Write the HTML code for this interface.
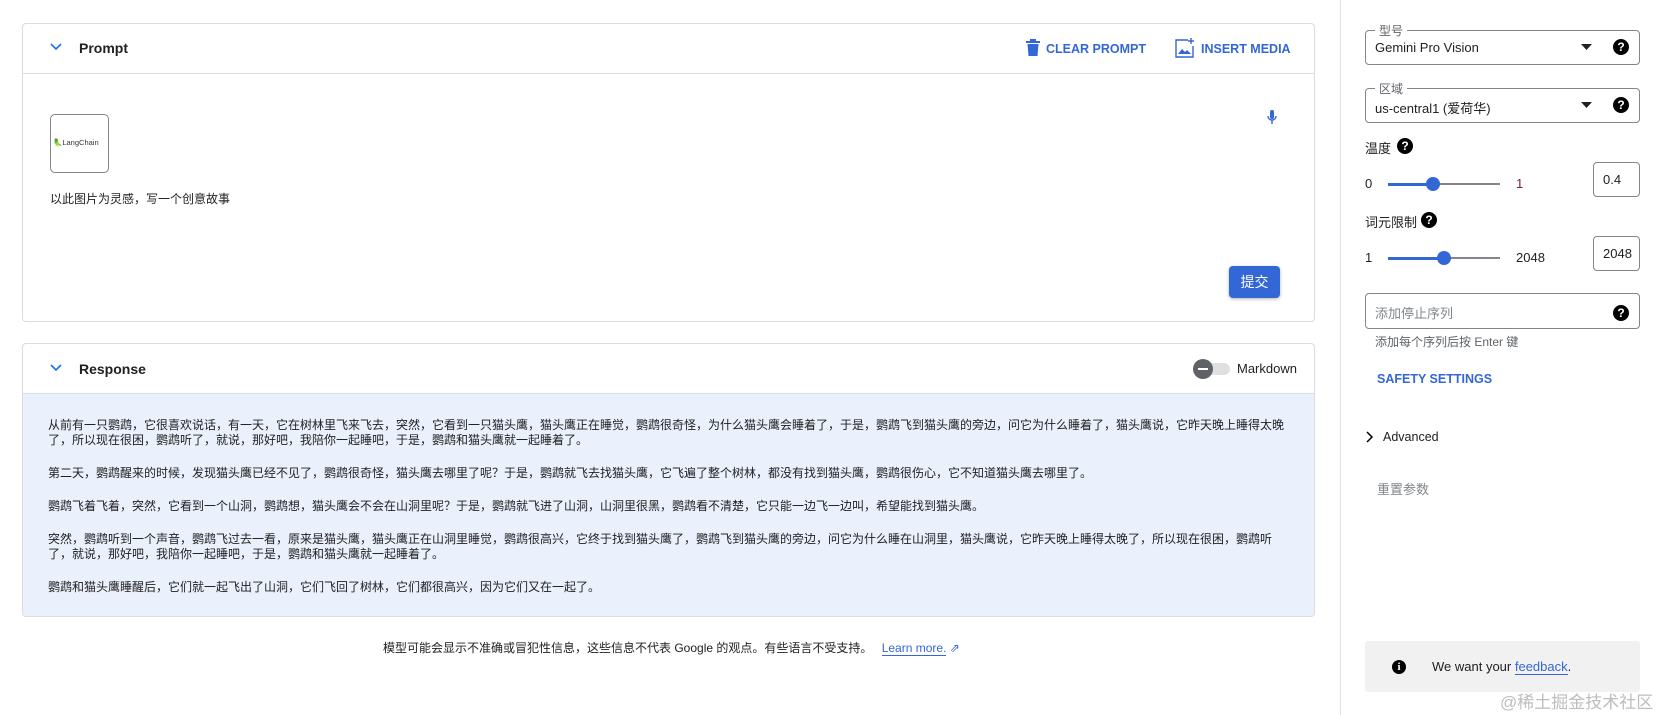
<!DOCTYPE html>
<html><head><meta charset="utf-8"><style>
*{box-sizing:border-box;margin:0;padding:0}
body{width:1665px;height:715px;background:#fff;font-family:"Liberation Sans","Noto Sans CJK SC",sans-serif;color:#202124;position:relative;overflow:hidden}
.a{position:absolute}
.card{position:absolute;left:22px;width:1293px;border:1px solid #dadce0;border-radius:4px;background:#fff}
.cjk{font-family:"Liberation Sans","Noto Sans CJK SC",sans-serif}
.field{position:absolute;left:1365px;width:275px;border:1px solid #80868b;border-radius:4px}
.lbl{position:absolute;top:-9px;left:9px;background:#fff;padding:0 4px;font-size:12px;color:#5f6368}
.q{position:absolute;width:16px;height:16px;border-radius:50%;background:#000;color:#fff;font-size:12px;font-weight:bold;text-align:center;line-height:16px}
.resp p{font-size:12px;line-height:15px;color:#202124;margin-bottom:18px;white-space:nowrap}
</style></head><body>

<div class="card" style="top:23px;height:299px">
  <div class="a" style="left:0;top:49px;width:1291px;height:1px;background:#dadce0"></div>
</div>
<svg class="a" style="left:49px;top:42px" width="14" height="10" viewBox="0 0 14 10"><path d="M2 2l5 5 5-5" stroke="#1a73e8" stroke-width="1.6" fill="none"/></svg>
<div class="a" style="left:79px;top:40px;font-size:14px;font-weight:bold">Prompt</div>
<svg class="a" style="left:1026px;top:39px" width="14" height="17" viewBox="0 0 14 17"><rect x="0" y="2" width="14" height="2" fill="#3367d6"/><rect x="4" y="0" width="6" height="2" fill="#3367d6"/><path d="M1.5 5h11l-1 12h-9z" fill="#3367d6"/></svg>
<div class="a" style="left:1046px;top:42px;font-size:12.5px;color:#3367d6;font-weight:bold">CLEAR PROMPT</div>
<svg class="a" style="left:1175px;top:38px" width="20" height="20" viewBox="0 0 20 20"><path d="M13 2H1v17h17V8" stroke="#3367d6" stroke-width="1.4" fill="none"/><path d="M16 0v6M13 3h6" stroke="#3367d6" stroke-width="1.4"/><path d="M3 16l4-5 3 3 2-2 4 4z" fill="#3367d6"/></svg>
<div class="a" style="left:1201px;top:42px;font-size:12.5px;color:#3367d6;font-weight:bold">INSERT MEDIA</div>
<div class="a" style="left:50px;top:114px;width:59px;height:59px;border:1px solid #80868b;border-radius:5px;background:#fff"></div>
<div class="a" style="left:53px;top:138px;font-size:7.5px;color:#333;white-space:nowrap"><span style="color:#6b8e23">🦜</span>LangChain</div>
<svg class="a" style="left:1267px;top:110px" width="10" height="15" viewBox="0 0 10 15"><rect x="3" y="0" width="4" height="9" rx="2" fill="#3367d6"/><path d="M1 6a4 4 0 0 0 8 0M5 10v4" stroke="#3367d6" stroke-width="1.4" fill="none"/></svg>
<div class="a cjk" style="left:50px;top:190px;font-size:12px">以此图片为灵感，写一个创意故事</div>
<div class="a cjk" style="left:1229px;top:266px;width:51px;height:32px;background:#3367d6;border-radius:4px;color:#fff;font-size:14px;text-align:center;line-height:32px;box-shadow:0 1px 3px rgba(0,0,0,.3)">提交</div>

<div class="card" style="top:343px;height:274px;overflow:hidden">
  <div class="a" style="left:0;top:49px;width:1291px;height:230px;background:#ebf1fc;border-top:1px solid #dadce0"></div>
</div>
<svg class="a" style="left:49px;top:363px" width="14" height="10" viewBox="0 0 14 10"><path d="M2 2l5 5 5-5" stroke="#1a73e8" stroke-width="1.6" fill="none"/></svg>
<div class="a" style="left:79px;top:361px;font-size:14px;font-weight:bold">Response</div>
<div class="a" style="left:1200px;top:363px;width:30px;height:12px;border-radius:6px;background:#e0e0e0"></div>
<div class="a" style="left:1193px;top:359px;width:20px;height:20px;border-radius:50%;background:#5f6368"></div>
<div class="a" style="left:1198px;top:368px;width:10px;height:2px;background:#fff"></div>
<div class="a" style="left:1237px;top:361px;font-size:13px">Markdown</div>
<div class="a resp cjk" style="left:48px;top:418px">
<p>从前有一只鹦鹉，它很喜欢说话，有一天，它在树林里飞来飞去，突然，它看到一只猫头鹰，猫头鹰正在睡觉，鹦鹉很奇怪，为什么猫头鹰会睡着了，于是，鹦鹉飞到猫头鹰的旁边，问它为什么睡着了，猫头鹰说，它昨天晚上睡得太晚<br>了，所以现在很困，鹦鹉听了，就说，那好吧，我陪你一起睡吧，于是，鹦鹉和猫头鹰就一起睡着了。</p>
<p>第二天，鹦鹉醒来的时候，发现猫头鹰已经不见了，鹦鹉很奇怪，猫头鹰去哪里了呢？于是，鹦鹉就飞去找猫头鹰，它飞遍了整个树林，都没有找到猫头鹰，鹦鹉很伤心，它不知道猫头鹰去哪里了。</p>
<p>鹦鹉飞着飞着，突然，它看到一个山洞，鹦鹉想，猫头鹰会不会在山洞里呢？于是，鹦鹉就飞进了山洞，山洞里很黑，鹦鹉看不清楚，它只能一边飞一边叫，希望能找到猫头鹰。</p>
<p>突然，鹦鹉听到一个声音，鹦鹉飞过去一看，原来是猫头鹰，猫头鹰正在山洞里睡觉，鹦鹉很高兴，它终于找到猫头鹰了，鹦鹉飞到猫头鹰的旁边，问它为什么睡在山洞里，猫头鹰说，它昨天晚上睡得太晚了，所以现在很困，鹦鹉听<br>了，就说，那好吧，我陪你一起睡吧，于是，鹦鹉和猫头鹰就一起睡着了。</p>
<p>鹦鹉和猫头鹰睡醒后，它们就一起飞出了山洞，它们飞回了树林，它们都很高兴，因为它们又在一起了。</p>
</div>

<div class="a cjk" style="left:383px;top:639px;font-size:12px;white-space:nowrap">模型可能会显示不准确或冒犯性信息，这些信息不代表 Google 的观点。有些语言不受支持。 <span style="color:#3367d6;border-bottom:1px solid #3367d6;margin-left:6px">Learn more.</span> <span style="color:#3367d6">⇗</span></div>

<div class="a" style="left:1340px;top:0;width:1px;height:715px;background:#e0e0e0"></div>

<div class="field" style="top:30px;height:35px"><div class="lbl">型号</div>
<div class="a" style="left:9px;top:9px;font-size:13px">Gemini Pro Vision</div></div>
<svg class="a" style="left:1581px;top:44px" width="11" height="6"><path d="M0 0h11L5.5 6z" fill="#202124"/></svg>
<div class="q" style="left:1613px;top:39px">?</div>

<div class="field" style="top:88px;height:35px"><div class="lbl">区域</div>
<div class="a" style="left:9px;top:9px;font-size:13px">us-central1 (爱荷华)</div></div>
<svg class="a" style="left:1581px;top:102px" width="11" height="6"><path d="M0 0h11L5.5 6z" fill="#202124"/></svg>
<div class="q" style="left:1613px;top:97px">?</div>

<div class="a" style="left:1365px;top:138px;font-size:13px">温度</div>
<div class="q" style="left:1397px;top:138px">?</div>
<div class="a" style="left:1365px;top:176px;font-size:13px">0</div>
<div class="a" style="left:1388px;top:183px;width:112px;height:2px;background:#80868b"></div>
<div class="a" style="left:1388px;top:183px;width:45px;height:3px;background:#3367d6"></div>
<div class="a" style="left:1426px;top:177px;width:14px;height:14px;border-radius:50%;background:#3367d6"></div>
<div class="a" style="left:1516px;top:176px;font-size:13px;color:#7a2036">1</div>
<div class="a" style="left:1593px;top:162px;width:47px;height:35px;border:1px solid #80868b;border-radius:4px;font-size:13px;padding:9px 0 0 9px">0.4</div>

<div class="a" style="left:1365px;top:212px;font-size:13px">词元限制</div>
<div class="q" style="left:1421px;top:212px">?</div>
<div class="a" style="left:1365px;top:250px;font-size:13px">1</div>
<div class="a" style="left:1388px;top:257px;width:112px;height:2px;background:#80868b"></div>
<div class="a" style="left:1388px;top:257px;width:56px;height:3px;background:#3367d6"></div>
<div class="a" style="left:1437px;top:251px;width:14px;height:14px;border-radius:50%;background:#3367d6"></div>
<div class="a" style="left:1516px;top:250px;font-size:13px">2048</div>
<div class="a" style="left:1593px;top:236px;width:47px;height:35px;border:1px solid #80868b;border-radius:4px;font-size:13px;padding:9px 0 0 9px">2048</div>

<div class="field" style="top:293px;height:36px">
<div class="a" style="left:9px;top:9px;font-size:13px;color:#80868b">添加停止序列</div></div>
<div class="q" style="left:1613px;top:305px">?</div>
<div class="a" style="left:1375px;top:333px;font-size:12px;color:#5f6368">添加每个序列后按 Enter 键</div>

<div class="a" style="left:1377px;top:372px;font-size:12.5px;font-weight:bold;color:#3367d6">SAFETY SETTINGS</div>
<svg class="a" style="left:1366px;top:431px" width="8" height="12"><path d="M1 1l5 5-5 5" stroke="#000" stroke-width="1.5" fill="none"/></svg>
<div class="a" style="left:1383px;top:430px;font-size:12.5px">Advanced</div>
<div class="a" style="left:1377px;top:479px;font-size:13px;color:#80868b">重置参数</div>

<div class="a" style="left:1365px;top:641px;width:275px;height:51px;background:#f1f1f1;border-radius:3px"></div>
<div class="a" style="left:1392px;top:660px;width:14px;height:14px;border-radius:50%;background:#000;color:#fff;font-size:11px;font-weight:bold;text-align:center;line-height:14px;font-family:'Liberation Serif',serif">i</div>
<div class="a" style="left:1432px;top:659px;font-size:13px">We want your <span style="color:#3367d6;border-bottom:1px solid #3367d6">feedback</span>.</div>
<div class="a cjk" style="left:1500px;top:688px;font-size:17px;color:#bdbdbd;white-space:nowrap">@稀土掘金技术社区</div>
</body></html>
